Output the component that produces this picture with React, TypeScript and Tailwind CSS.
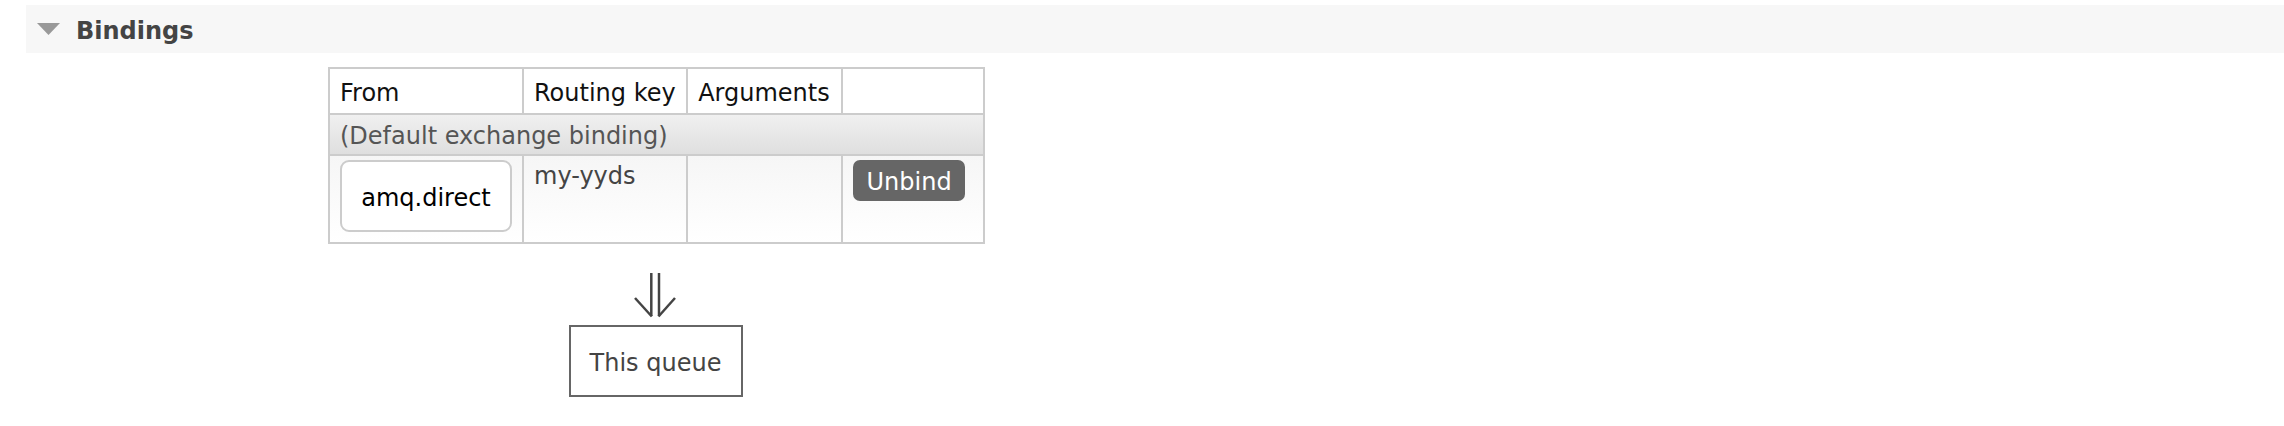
import React from 'react'

const cols = ['From', 'Routing key', 'Arguments', '']
const colW = ['w-[193px]', 'w-[165px]', 'w-[155px]', 'w-[142px]']

function DownArrow() {
  // double-stemmed arrow between the binding table and the queue
  return (
    <svg width="45" height="47" viewBox="0 0 45 47" fill="none" stroke="#444" strokeWidth="2.5">
      <line x1="18.3" y1="1" x2="18.3" y2="44" />
      <line x1="26" y1="1" x2="26" y2="44" />
      <line x1="2" y1="26" x2="18.8" y2="44.5" />
      <line x1="42" y1="26" x2="25.5" y2="44.5" />
    </svg>
  )
}

export default function App() {
  return (
    <div className="min-h-[426px] bg-white pt-[5px] font-['DejaVu_Sans',Verdana,sans-serif] text-[24px]">
      <div className="ml-[26px] flex h-[48px] items-center bg-[#f7f7f7]">
        <svg className="ml-[11px]" width="23" height="12" viewBox="0 0 23 12">
          <path d="M0 0H23L11.5 12Z" fill="#999" />
        </svg>
        <h2 className="ml-[16px] pt-[3px] text-[24px] font-bold text-[#444]">Bindings</h2>
      </div>

      <div className="ml-[328px] mt-[14px] flex w-[657px] flex-col items-center">
        <table className="table-fixed border-separate border-spacing-0 border-l-2 border-t-2 border-[#ccc] text-left">
          <thead>
            <tr className="h-[46px] bg-white">
              {cols.map((c, i) => (
                <th key={i} className={`${colW[i]} border-b-2 border-r-2 border-[#ccc] px-[10px] pt-[3px] align-middle font-normal text-[#111]`}>
                  {c}
                </th>
              ))}
            </tr>
          </thead>
          <tbody>
            <tr className="h-[40px]">
              <td colSpan={4} className="border-b-2 border-r-2 border-[#ccc] bg-gradient-to-b from-[#f0f0f0] to-[#dfdfdf] px-[10px] pt-[3px] align-middle text-[#555]">
                (Default exchange binding)
              </td>
            </tr>
            <tr className="h-[88px] bg-gradient-to-b from-[#f6f6f6] to-white">
              <td className="border-b-2 border-r-2 border-[#ccc] px-[10px] pt-[4px] align-top">
                <div className="flex h-[72px] w-[172px] items-center justify-center rounded-[9px] border-2 border-[#ccc] bg-white pt-[3px] text-black">
                  amq.direct
                </div>
              </td>
              <td className="border-b-2 border-r-2 border-[#ccc] px-[10px] pt-[6px] align-top leading-[28px] text-[#444]">
                my-yyds
              </td>
              <td className="border-b-2 border-r-2 border-[#ccc] px-[10px] align-top"></td>
              <td className="border-b-2 border-r-2 border-[#ccc] px-[10px] pt-[4px] align-top">
                <button className="flex h-[41px] w-[112px] items-center justify-center rounded-[7px] bg-[#666] pt-[3px] text-white">
                  Unbind
                </button>
              </td>
            </tr>
          </tbody>
        </table>

        <div className="mt-[28px] -translate-x-[1px]">
          <DownArrow />
        </div>
        <div className="mt-[6px] flex h-[72px] w-[174px] -translate-x-[1px] items-center justify-center border-2 border-[#666] pt-[3px] text-[#444]">
          This queue
        </div>
      </div>
    </div>
  )
}
